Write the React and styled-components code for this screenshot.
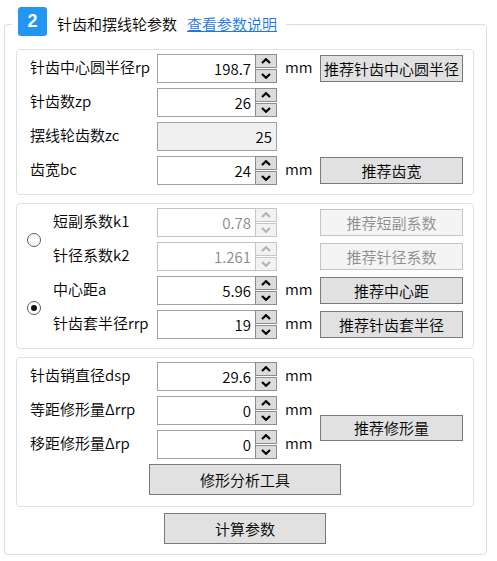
import React from "react";
import styled, { createGlobalStyle } from "styled-components";

const GlobalStyle = createGlobalStyle`
  body {
    margin: 0;
    background: #ffffff;
    font-family: "Noto Sans CJK SC", "Noto Sans", sans-serif;
    font-weight: 350;
    color: #000;
  }
`;

// Contenedor de la página
const Page = styled.div`
  padding: 7px 0 0 4px;
  width: 483px;
`;

// Marco principal con su leyenda
const Frame = styled.fieldset`
  margin: 0;
  min-width: 0;
  width: 483px;
  box-sizing: border-box;
  border: 1px solid #d6dde3;
  border-radius: 4px;
  padding: 0 12px 10px 11px;
`;

const Legend = styled.legend`
  margin-left: -4px;
  padding: 0 9px 0 6px;
`;

const LegendRow = styled.div`
  display: flex;
  align-items: center;
  height: 34px;
`;

const Badge = styled.span`
  width: 29px;
  height: 29px;
  margin-bottom: 5px;
  margin-right: 10px;
  background: #2196f3;
  color: #fff;
  border-radius: 3px;
  display: flex;
  align-items: center;
  justify-content: center;
  font: bold 18px "Liberation Sans", sans-serif;
`;

const Title = styled.span`
  font-size: 15px;
  line-height: 22px;
  margin-right: 10px;
`;

const HelpLink = styled.a`
  font-size: 15px;
  line-height: 22px;
  color: #1e78e0;
  text-decoration: underline;
  cursor: pointer;
`;

// Caja interior de cada grupo de parámetros
const Group = styled.div`
  margin-top: 8px;
  border: 1px solid #dde2e7;
  border-radius: 4px;
  padding: 4px 10px ${(p) => p.$pb || 9}px;
`;

const Grid = styled.div`
  display: grid;
  grid-template-columns: 26px 104px 120px 43px 143px;
  grid-auto-rows: 29px;
  row-gap: 5px;
`;

const Label = styled.span`
  grid-column: ${(p) => (p.$indent ? "2" : "1 / span 2")};
  padding-left: ${(p) => (p.$indent ? 0 : 3)}px;
  align-self: center;
  font-size: 15px;
  line-height: 22px;
  padding-bottom: 4px;
  white-space: nowrap;
`;

const Unit = styled.span`
  grid-column: 4;
  align-self: center;
  padding-left: 8px;
  font-size: 15px;
  line-height: 22px;
  padding-bottom: 4px;
`;

const SpinBox = styled.div`
  grid-column: 3;
  display: flex;
  height: 29px;
`;

const Field = styled.input`
  flex: 1;
  min-width: 0;
  box-sizing: border-box;
  height: 29px;
  margin: 0;
  padding: 0 4px 1px;
  border: 1px solid ${(p) => (p.$dim ? "#c2c2c2" : "#a3a3a3")};
  background: ${(p) => (p.$locked ? "#f0f0f0" : "#fff")};
  color: ${(p) => (p.$dim ? "#8a8a8a" : "#000")};
  font: 350 15px "Noto Sans CJK SC", "Noto Sans", sans-serif;
  text-align: right;
  outline: none;
`;

const Spinner = styled.div`
  width: 22px;
  display: flex;
  flex-direction: column;
  margin-left: -1px;
`;

const SpinButton = styled.div`
  flex: 1;
  display: flex;
  align-items: center;
  justify-content: center;
  box-sizing: border-box;
  border: 1px solid ${(p) => (p.$dim ? "#c6c6c6" : "#8c8c8c")};
  background: ${(p) => (p.$dim ? "#f2f2f2" : "#dcdcdc")};
  & + & {
    margin-top: 1px;
  }
`;

const Button = styled.button`
  grid-column: 5;
  grid-row: ${(p) => p.$row || "auto"};
  align-self: center;
  height: ${(p) => p.$h || 27}px;
  width: ${(p) => (p.$w ? `${p.$w}px` : "100%")};
  margin: 0;
  padding: 0;
  border: 1px solid ${(p) => (p.disabled ? "#c4c4c4" : "#7a7a7a")};
  background: ${(p) => (p.disabled ? "#f4f4f4" : "#e1e1e1")};
  color: ${(p) => (p.disabled ? "#8d8d8d" : "#000")};
  font: 350 15px "Noto Sans CJK SC", "Noto Sans", sans-serif;
  white-space: nowrap;
  cursor: pointer;
`;

const Radio = styled.span`
  grid-column: 1;
  grid-row: ${(p) => p.$row};
  align-self: center;
  width: 14px;
  height: 14px;
  box-sizing: border-box;
  border: 1px solid #5a5a5a;
  border-radius: 50%;
  display: flex;
  align-items: center;
  justify-content: center;
  &::after {
    content: "";
    display: ${(p) => (p.$checked ? "block" : "none")};
    width: 6px;
    height: 6px;
    border-radius: 50%;
    background: #111;
  }
`;

const CenterRow = styled.div`
  display: flex;
  justify-content: center;
  margin-top: ${(p) => p.$mt || 4}px;
`;

const Chevron = ({ up, dim }) => (
  <svg width="10" height="6" viewBox="0 0 10 6">
    <polyline
      points={up ? "1,5 5,1.2 9,5" : "1,1 5,4.8 9,1"}
      fill="none"
      stroke={dim ? "#b4b4b4" : "#000"}
      strokeWidth="2.2"
    />
  </svg>
);

const Spin = ({ value, dim }) => (
  <SpinBox>
    <Field readOnly $dim={dim} defaultValue={value} />
    <Spinner>
      <SpinButton $dim={dim}>
        <Chevron up dim={dim} />
      </SpinButton>
      <SpinButton $dim={dim}>
        <Chevron dim={dim} />
      </SpinButton>
    </Spinner>
  </SpinBox>
);

export default function App() {
  return (
    <Page>
      <GlobalStyle />
      <Frame>
        <Legend>
          <LegendRow>
            <Badge>2</Badge>
            <Title>针齿和摆线轮参数</Title>
            <HelpLink>查看参数说明</HelpLink>
          </LegendRow>
        </Legend>

        <Group $pb={9}>
          <Grid>
            <Label>针齿中心圆半径rp</Label>
            <Spin value="198.7" />
            <Unit>mm</Unit>
            <Button>推荐针齿中心圆半径</Button>

            <Label>针齿数zp</Label>
            <Spin value="26" />

            <Label>摆线轮齿数zc</Label>
            <SpinBox>
              <Field readOnly $locked defaultValue="25" />
            </SpinBox>

            <Label>齿宽bc</Label>
            <Spin value="24" />
            <Unit>mm</Unit>
            <Button>推荐齿宽</Button>
          </Grid>
        </Group>

        <Group>
          <Grid>
            <Radio $row="1 / span 2" />
            <Label $indent>短副系数k1</Label>
            <Spin value="0.78" dim />
            <Button disabled>推荐短副系数</Button>

            <Label $indent>针径系数k2</Label>
            <Spin value="1.261" dim />
            <Button disabled>推荐针径系数</Button>

            <Radio $row="3 / span 2" $checked />
            <Label $indent>中心距a</Label>
            <Spin value="5.96" />
            <Unit>mm</Unit>
            <Button>推荐中心距</Button>

            <Label $indent>针齿套半径rrp</Label>
            <Spin value="19" />
            <Unit>mm</Unit>
            <Button>推荐针齿套半径</Button>
          </Grid>
        </Group>

        <Group $pb={11}>
          <Grid>
            <Label>针齿销直径dsp</Label>
            <Spin value="29.6" />
            <Unit>mm</Unit>

            <Label>等距修形量Δrrp</Label>
            <Spin value="0" />
            <Unit>mm</Unit>
            <Button $row="2 / span 2" $h={26}>推荐修形量</Button>

            <Label>移距修形量Δrp</Label>
            <Spin value="0" />
            <Unit>mm</Unit>
          </Grid>
          <CenterRow $mt={5}>
            <Button $w={192} $h={31}>修形分析工具</Button>
          </CenterRow>
        </Group>

        <CenterRow $mt={6}>
          <Button $w={162} $h={31}>计算参数</Button>
        </CenterRow>
      </Frame>
    </Page>
  );
}
